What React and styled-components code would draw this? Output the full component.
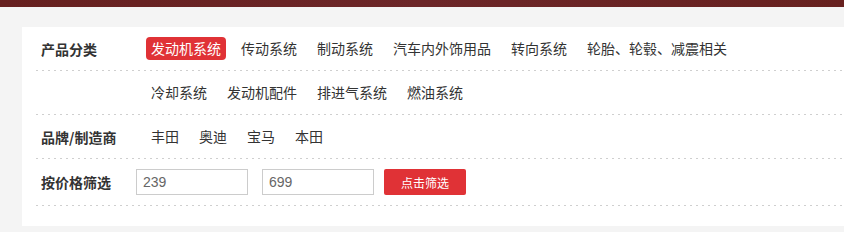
import React from "react";
import styled, { createGlobalStyle } from "styled-components";

const GlobalStyle = createGlobalStyle`
  html, body {
    margin: 0;
    padding: 0;
    background: #f4f4f4;
    font-family: "Noto Sans CJK SC", "Liberation Sans", sans-serif;
    color: #333;
  }
`;

const categories = [
  ["发动机系统", "传动系统", "制动系统", "汽车内外饰用品", "转向系统", "轮胎、轮毂、减震相关"],
  ["冷却系统", "发动机配件", "排进气系统", "燃油系统"],
];

const brands = ["丰田", "奥迪", "宝马", "本田"];

class App extends React.Component {
  constructor(props) {
    super(props);
    this.state = {
      active: "发动机系统",
      min: "239",
      max: "699",
    };
  }

  render() {
    const { active, min, max } = this.state;
    return (
      <Page>
        <GlobalStyle />
        <TopBar />
        <Card>
          {categories.map((list, i) => (
            <Row key={i}>
              <Label>{i === 0 ? "产品分类" : ""}</Label>
              <Items>
                {list.map((name) => (
                  <Item
                    key={name}
                    $active={name === active}
                    onClick={() => this.setState({ active: name })}
                  >
                    {name}
                  </Item>
                ))}
              </Items>
            </Row>
          ))}
          <Row>
            <Label>品牌/制造商</Label>
            <Items>
              {brands.map((name) => (
                <Item key={name}>{name}</Item>
              ))}
            </Items>
          </Row>
          <Row $tall>
            <Label $narrow>按价格筛选</Label>
            <PriceBox>
              <PriceInput
                value={min}
                onChange={(e) => this.setState({ min: e.target.value })}
              />
              <PriceInput
                value={max}
                onChange={(e) => this.setState({ max: e.target.value })}
              />
              <FilterBtn>点击筛选</FilterBtn>
            </PriceBox>
          </Row>
        </Card>
      </Page>
    );
  }
}

export default App;

const Page = styled.div`
  width: 844px;
  height: 232px;
  overflow: hidden;
  background: #f4f4f4;
`;

const TopBar = styled.div`
  height: 7px;
  background: linear-gradient(90deg, #66201f 0%, #6c2628 50%, #67211f 100%);
`;

const Card = styled.div`
  margin: 20px 0 0 22px;
  padding: 0 0 20px 14px;
  background: #fff;
`;

const Row = styled.div`
  display: flex;
  align-items: center;
  min-height: ${(p) => (p.$tall ? "46px" : "43px")};
  padding-bottom: 1px;
  background-image: linear-gradient(90deg, #cfcfcf 2px, transparent 2px);
  background-size: 6px 1px;
  background-repeat: repeat-x;
  background-position: left bottom;
`;

const Label = styled.div`
  flex: 0 0 ${(p) => (p.$narrow ? "100px" : "110px")};
  padding-left: 5px;
  box-sizing: border-box;
  font-size: 14px;
  font-weight: bold;
  color: #333;
`;

const Items = styled.div`
  display: flex;
  align-items: center;
  gap: 10px;
`;

const Item = styled.span`
  display: inline-block;
  height: 23px;
  line-height: 23px;
  padding: 0 5px;
  border-radius: 4px;
  font-size: 14px;
  cursor: pointer;
  color: ${(p) => (p.$active ? "#fff" : "#333")};
  background: ${(p) => (p.$active ? "#e03236" : "transparent")};
`;

const PriceBox = styled.div`
  display: flex;
  align-items: center;
`;

const PriceInput = styled.input`
  width: 112px;
  height: 26px;
  box-sizing: border-box;
  margin-right: 14px;
  padding: 0 6px;
  border: 1px solid #cccccc;
  outline: none;
  font-family: "Liberation Sans", sans-serif;
  font-size: 14px;
  color: #666;
  &:nth-of-type(2) {
    margin-right: 10px;
  }
`;

const FilterBtn = styled.button`
  width: 82px;
  height: 26px;
  border: none;
  border-radius: 2px;
  background: #e03236;
  color: #fff;
  font-family: "Noto Sans CJK SC", sans-serif;
  font-size: 12px;
  cursor: pointer;
`;
